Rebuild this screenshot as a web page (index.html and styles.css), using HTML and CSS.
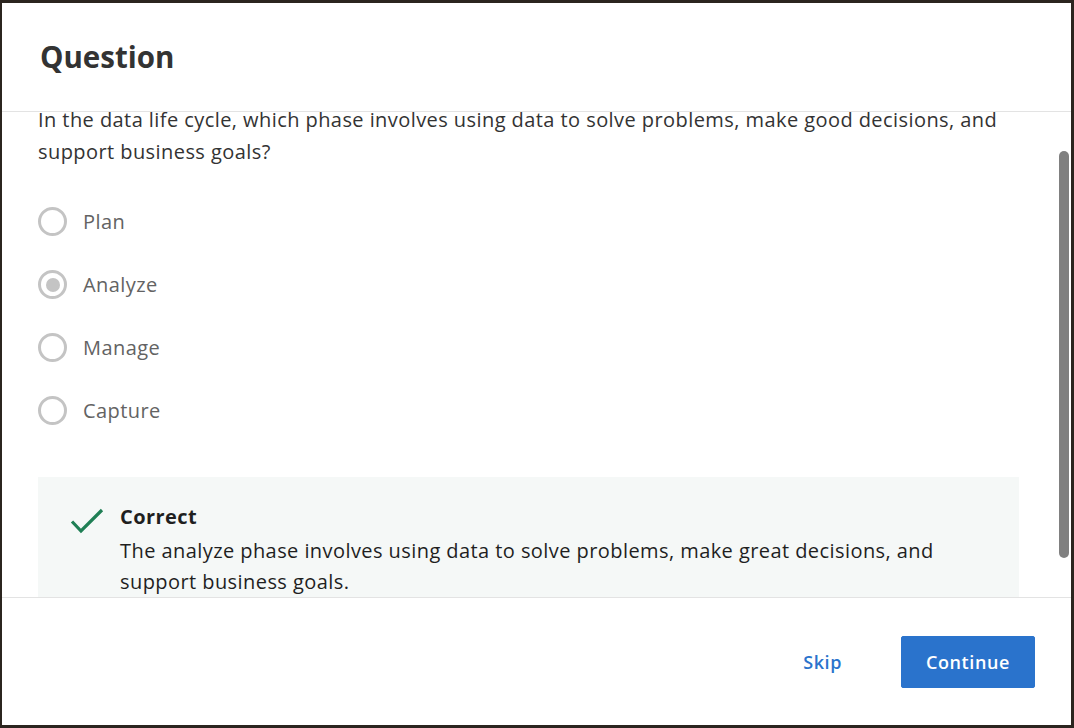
FILE: index.html
```html
<!DOCTYPE html>
<html lang="en">
<head>
<meta charset="utf-8">
<title>Question</title>
<link rel="stylesheet" href="styles.css">
</head>
<body>
<div class="modal">
  <header class="modal-header">
    <h2 class="title">Question</h2>
  </header>
  <section class="modal-body">
    <div class="content">
      <p class="question">In the data life cycle, which phase involves using data to solve problems, make good decisions, and support business goals?</p>
      <div class="options">
        <div class="option"><span class="radio"></span><span class="label">Plan</span></div>
        <div class="option"><span class="radio checked"></span><span class="label">Analyze</span></div>
        <div class="option"><span class="radio"></span><span class="label">Manage</span></div>
        <div class="option"><span class="radio"></span><span class="label">Capture</span></div>
      </div>
      <div class="feedback">
        <svg class="check" width="34" height="26" viewBox="0 0 34 26" aria-hidden="true">
          <path d="M2 13.5 L11 23 L32 2" fill="none" stroke="#1f7f55" stroke-width="3.2" stroke-linecap="butt" stroke-linejoin="miter"/>
        </svg>
        <div class="feedback-text">
          <div class="feedback-title">Correct</div>
          <div class="feedback-desc">The analyze phase involves using data to solve problems, make great decisions, and support business goals.</div>
        </div>
      </div>
    </div>
    <div class="scroll-thumb"></div>
  </section>
  <footer class="modal-footer">
    <button class="btn-skip">Skip</button>
    <button class="btn-continue">Continue</button>
  </footer>
</div>
</body>
</html>
```
FILE: styles.css
```css
html, body {
  margin: 0;
  padding: 0;
}
body {
  background: #2b251f;
  font-family: "Open Sans", "Noto Sans", sans-serif;
  height: 728px;
  overflow: hidden;
}
.modal {
  margin: 3px 3px 0 2px;
  height: 722px;
  background: #ffffff;
  display: flex;
  flex-direction: column;
}
.modal-header {
  height: 108px;
  flex: 0 0 108px;
  display: flex;
  align-items: center;
  padding-left: 38px;
  border-bottom: 1px solid #e3e3e3;
}
.title {
  margin: 0;
  font-size: 29.5px;
  font-weight: 700;
  color: #333333;
  line-height: 36px;
}
.modal-body {
  position: relative;
  flex: 1 1 auto;
  overflow: hidden;
}
.content {
  margin-top: -8px;
  padding: 0 52px 0 36px;
  letter-spacing: 0.43px;
}
.question {
  margin: 0;
  font-size: 20px;
  line-height: 32px;
  color: #333333;
}
.options {
  margin-top: 22px;
  display: flex;
  flex-direction: column;
}
.option {
  height: 63px;
  display: flex;
  align-items: center;
  gap: 16px;
}
.radio {
  box-sizing: border-box;
  width: 29px;
  height: 29px;
  border: 3px solid #c4c4c4;
  border-radius: 50%;
  display: flex;
  align-items: center;
  justify-content: center;
  flex: 0 0 auto;
}
.radio.checked::after {
  content: "";
  width: 14px;
  height: 14px;
  border-radius: 50%;
  background: #c4c4c4;
}
.label {
  font-size: 20px;
  color: #636363;
  line-height: 32px;
}
.feedback {
  margin-top: 35px;
  background: #f5f8f7;
  display: flex;
  gap: 16px;
  padding: 24px 20px 30px 32px;
}
.check {
  flex: 0 0 auto;
  margin-top: 7px;
}
.feedback-text {
  flex: 1 1 auto;
}
.feedback-title {
  font-size: 20px;
  font-weight: 700;
  color: #1f1f1f;
  line-height: 32px;
}
.feedback-desc {
  margin-top: 2px;
  font-size: 20px;
  line-height: 31px;
  color: #1f1f1f;
}
.scroll-thumb {
  position: absolute;
  top: 39px;
  right: 2px;
  width: 10px;
  height: 407px;
  background: #808080;
  border-radius: 5px;
}
.modal-footer {
  flex: 0 0 127px;
  border-top: 1px solid #e3e3e3;
  display: flex;
  align-items: center;
  justify-content: flex-end;
  padding-right: 36px;
  gap: 37px;
}
.btn-skip,
.btn-continue {
  font-family: "Open Sans", "Noto Sans", sans-serif;
  font-size: 18px;
  font-weight: 600;
  letter-spacing: 0.6px;
  height: 52px;
  padding: 0 22px;
  border-radius: 2px;
  cursor: pointer;
}
.btn-skip {
  background: transparent;
  border: none;
  color: #2a73cc;
}
.btn-continue {
  background: #2a73cc;
  border: 1px solid #2a73cc;
  color: #ffffff;
  width: 134px;
}
```
